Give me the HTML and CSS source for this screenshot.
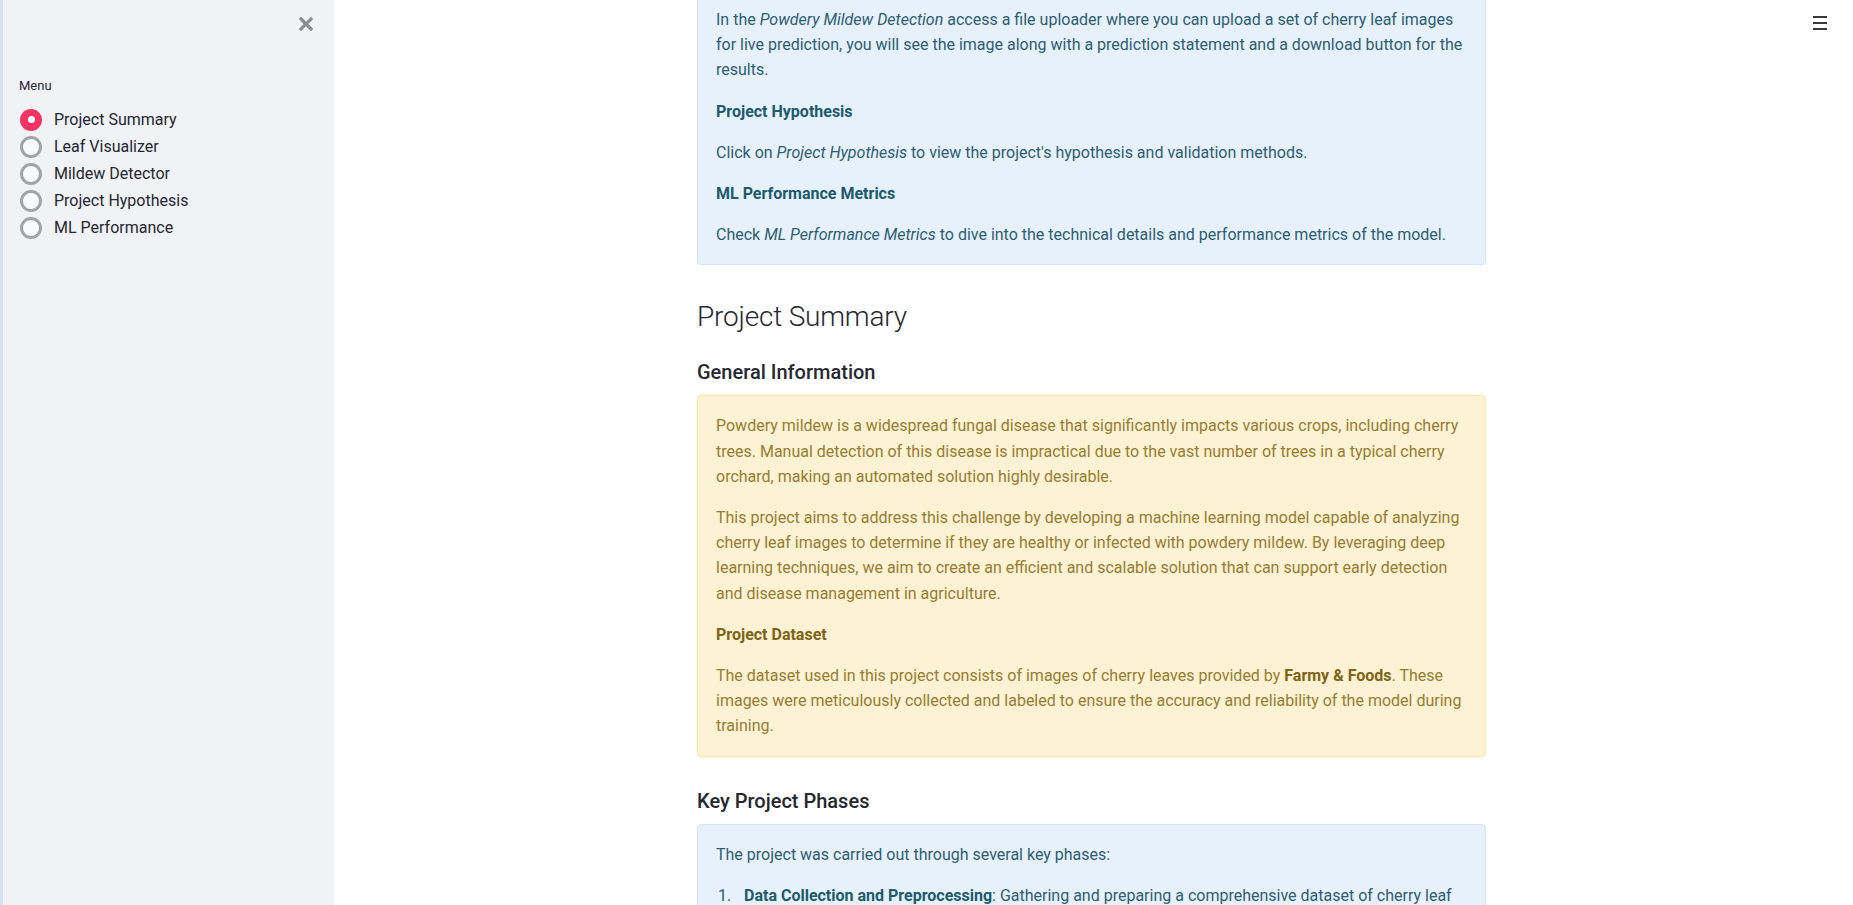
FILE: index.html
```html
<!DOCTYPE html>
<html lang="en">
<head>
<meta charset="utf-8">
<title>Project Summary</title>
<link rel="stylesheet" href="styles.css">
</head>
<body>
<div class="app">
  <aside class="sidebar">
    <div class="sidebar-top">
      <button class="close-btn" aria-label="Close sidebar">
        <svg width="14" height="14" viewBox="0 0 14 14"><path d="M2 2 L12 12 M12 2 L2 12" stroke="#8d8d8f" stroke-width="3.2" stroke-linecap="square"/></svg>
      </button>
    </div>
    <div class="menu">
      <div class="menu-label">Menu</div>
      <div class="radio-group">
        <div class="radio selected"><span class="dot"></span><span class="radio-text">Project Summary</span></div>
        <div class="radio"><span class="dot"></span><span class="radio-text">Leaf Visualizer</span></div>
        <div class="radio"><span class="dot"></span><span class="radio-text">Mildew Detector</span></div>
        <div class="radio"><span class="dot"></span><span class="radio-text">Project Hypothesis</span></div>
        <div class="radio"><span class="dot"></span><span class="radio-text">ML Performance</span></div>
      </div>
    </div>
  </aside>
  <main class="main">
    <div class="hamburger" aria-label="Menu"><span></span><span></span><span></span></div>
    <div class="content">
      <div class="alert info first">
        <p>In the <em>Powdery Mildew Detection</em> access a file uploader where you can upload a set of cherry leaf images for live prediction, you will see the image along with a prediction statement and a download button for the results.</p>
        <p><strong>Project Hypothesis</strong></p>
        <p>Click on <em>Project Hypothesis</em> to view the project's hypothesis and validation methods.</p>
        <p><strong>ML Performance Metrics</strong></p>
        <p>Check <em>ML Performance Metrics</em> to dive into the technical details and performance metrics of the model.</p>
      </div>
      <h2 class="title">Project Summary</h2>
      <h3 class="subtitle">General Information</h3>
      <div class="alert warning">
        <p>Powdery mildew is a widespread fungal disease that significantly impacts various crops, including cherry trees. Manual detection of this disease is impractical due to the vast number of trees in a typical cherry orchard, making an automated solution highly desirable.</p>
        <p>This project aims to address this challenge by developing a machine learning model capable of analyzing cherry leaf images to determine if they are healthy or infected with powdery mildew. By leveraging deep learning techniques, we aim to create an efficient and scalable solution that can support early detection and disease management in agriculture.</p>
        <p><strong>Project Dataset</strong></p>
        <p>The dataset used in this project consists of images of cherry leaves provided by <strong>Farmy &amp; Foods</strong>. These images were meticulously collected and labeled to ensure the accuracy and reliability of the model during training.</p>
      </div>
      <h3 class="subtitle second">Key Project Phases</h3>
      <div class="alert info">
        <p>The project was carried out through several key phases:</p>
        <ol class="phases">
          <li><span class="num">1.</span><span><strong>Data Collection and Preprocessing</strong>: Gathering and preparing a comprehensive dataset of cherry leaf images, ensuring data quality and consistency.</span></li>
          <li><span class="num">2.</span><span><strong>Model Development</strong>: Designing and training a convolutional neural network to classify leaves.</span></li>
        </ol>
      </div>
    </div>
  </main>
</div>
</body>
</html>
```
FILE: styles.css
```css
* { box-sizing: border-box; }

html, body {
  margin: 0;
  padding: 0;
  background: #ffffff;
  font-family: Roboto, "Liberation Sans", sans-serif;
  color: #262730;
}

.app {
  display: flex;
  height: 100vh;
  overflow: hidden;
}

.sidebar {
  width: 334px;
  flex: 0 0 334px;
  height: 100%;
  background: #f0f2f6;
  border-left: 3px solid #d6e2ee;
  padding: 0 16px;
}

.sidebar-top {
  display: flex;
  justify-content: flex-end;
  height: 48px;
  padding-top: 17px;
  padding-right: 5px;
}

.close-btn {
  border: 0;
  background: transparent;
  padding: 0;
  width: 14px;
  height: 14px;
  display: flex;
}

.menu {
  padding-top: 29px;
}

.menu-label {
  font-size: 13px;
  line-height: 18px;
  color: #2b2438;
  margin-bottom: 11px;
}

.radio-group {
  display: flex;
  flex-direction: column;
}

.radio {
  display: flex;
  align-items: center;
  height: 27px;
}

.dot {
  width: 22px;
  height: 22px;
  border-radius: 50%;
  border: 3px solid #a3a3a6;
  background: #f8f9fb;
  margin-left: 1px;
  margin-right: 12px;
  display: flex;
  align-items: center;
  justify-content: center;
}

.radio.selected .dot {
  background: #f63366;
  border-color: #f63366;
}

.radio.selected .dot::after {
  content: "";
  width: 7px;
  height: 7px;
  border-radius: 50%;
  background: #ffffff;
}

.radio-text {
  font-size: 16px;
  color: #262730;
}

.main {
  flex: 1;
  position: relative;
  height: 100%;
  overflow: hidden;
  display: flex;
  justify-content: center;
  padding-right: 4px;
}

.hamburger {
  position: absolute;
  top: 16px;
  right: 26px;
  width: 14px;
  display: flex;
  flex-direction: column;
  gap: 4px;
}

.hamburger span {
  display: block;
  height: 2px;
  background: #3b3b3f;
}

.content {
  width: 789px;
  margin-top: -11px;
}

.alert {
  border-radius: 4px;
  padding: 17px 18px;
  font-size: 16px;
  line-height: 25.2px;
}

.alert p {
  margin: 0 0 16px;
}

.alert p:last-child {
  margin-bottom: 0;
}

.info {
  background: #e6f1fb;
  border: 1px solid #d3e5f7;
  color: #2f5d72;
}

.info strong { color: #1d5a6c; }

.warning {
  background: #fdf2d4;
  border: 1px solid #fbe6a9;
  color: #977d33;
}

.warning strong { color: #7f6317; }

.title {
  margin: 35px 0 0;
  font-size: 28px;
  line-height: 34px;
  font-weight: 300;
  letter-spacing: -0.2px;
  color: #262730;
}

.subtitle {
  margin: 26px 0 11px;
  font-size: 20px;
  line-height: 24px;
  font-weight: 500;
  color: #262730;
}

.subtitle.second {
  margin-top: 32px;
  margin-bottom: 11px;
}

.phases {
  margin: 0;
  padding: 0;
  list-style: none;
}

.phases li {
  display: grid;
  grid-template-columns: 28px 1fr;
}

.num {
  padding-left: 2px;
}
```
